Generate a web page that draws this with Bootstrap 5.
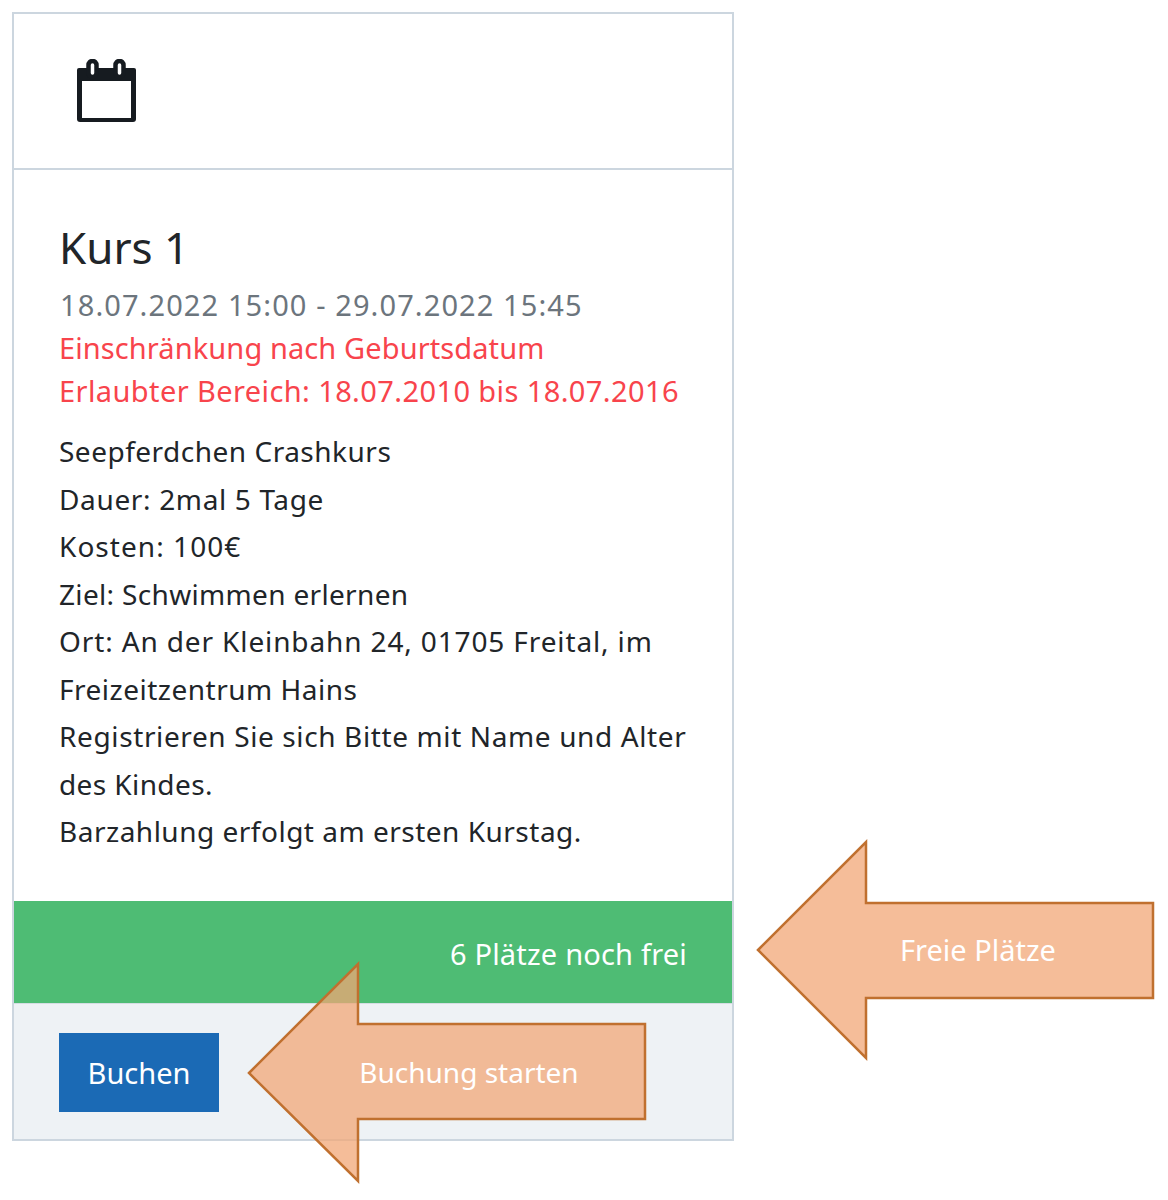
<!DOCTYPE html>
<html lang="de">
<head>
<meta charset="utf-8">
<title>Kurs 1</title>
<link href="https://cdn.jsdelivr.net/npm/bootstrap@5.3.0/dist/css/bootstrap.min.css" rel="stylesheet">
<style>
body { background:#fff; font-family:"Noto Sans","Open Sans",sans-serif; color:#212529; margin:0; }
.stage { position:relative; width:1168px; height:1200px; padding:12px 0 0 12px; }
.kurs-card { width:722px; height:1129px; border:2px solid #ccd6df; border-radius:0; font-size:28px; line-height:47.5px; }
.kurs-head { height:156px; padding:45px 0 0 63px; background:#fff; border-bottom:2px solid #ccd6df; }
.kurs-head svg { display:block; }
.kurs-body { padding:44px 45px 0; flex:1 1 auto; }
.kurs-title { font-size:44px; line-height:66px; margin:0 0 3px 0; font-weight:400; color:#212529; }
.kurs-date { font-size:29px; line-height:43px; color:#6c757d; margin-left:1px; letter-spacing:1.1px; }
.kurs-limit { font-size:29px; line-height:43px; color:#f8444c; }
.kurs-desc { margin-top:16px; }
.kurs-desc span { display:block; }
.sp1 { letter-spacing:.1px; }
.sp3 { letter-spacing:.33px; }
.sp4 { letter-spacing:.4px; }
.sp5 { letter-spacing:.5px; }
.sp6 { letter-spacing:.62px; }
.sp7 { letter-spacing:.65px; }
.sp8 { letter-spacing:.87px; }
.sp9 { letter-spacing:1.05px; }
.kurs-free { height:102px; background:#4ebc74; color:#fff; font-size:29px; padding:29px 45px 0 0; text-align:right; letter-spacing:.2px; }
.kurs-foot { height:136px; background:#eef2f5; padding:29px 0 0 45px; border-top:1px solid #d5dde3; }
.kurs-btn { width:160px; height:79px; border-radius:0; background:#1b6ab5; border:1px solid #1b6ab5; color:#fff; font-size:29px; line-height:1; padding:0; }
.pfeil { position:absolute; left:0; top:0; pointer-events:none; }
.pfeil text { font-family:"Noto Sans","Open Sans",sans-serif; font-size:29px; fill:#fff; text-anchor:middle; }
.pfeil .klein { font-size:28px; }
.pfeil polygon { fill:#f2a676; fill-opacity:.74; stroke:#c0702f; stroke-width:2.5; }
</style>
</head>
<body>
<div class="stage">
  <div class="card kurs-card">
    <div class="kurs-head">
      <svg width="60" height="64" viewBox="77 59 60 64" fill="none" aria-hidden="true">
        <path d="M79 68h55a2 2 0 0 1 2 2v49a3 3 0 0 1-3 3H80a3 3 0 0 1-3-3V70a2 2 0 0 1 2-2z" fill="#161b20"/>
        <rect x="82" y="81" width="49" height="37" fill="#fff"/>
        <rect x="88.5" y="61" width="8" height="16" rx="4" fill="#fff" stroke="#161b20" stroke-width="4.5"/>
        <rect x="115.5" y="61" width="8" height="16" rx="4" fill="#fff" stroke="#161b20" stroke-width="4.5"/>
      </svg>
    </div>
    <div class="kurs-body">
      <h5 class="kurs-title">Kurs 1</h5>
      <div class="kurs-date">18.07.2022 15:00 - 29.07.2022 15:45</div>
      <div class="kurs-limit sp1">Einschränkung nach Geburtsdatum</div>
      <div class="kurs-limit sp4">Erlaubter Bereich: 18.07.2010 bis 18.07.2016</div>
      <div class="kurs-desc">
        <span class="sp5">Seepferdchen Crashkurs</span>
        <span class="sp7">Dauer: 2mal 5 Tage</span>
        <span class="sp9">Kosten: 100€</span>
        <span class="sp3">Ziel: Schwimmen erlernen</span>
        <span class="sp8">Ort: An der Kleinbahn 24, 01705 Freital, im</span>
        <span class="sp5">Freizeitzentrum Hains</span>
        <span class="sp6">Registrieren Sie sich Bitte mit Name und Alter</span>
        <span class="sp4">des Kindes.</span>
        <span class="sp5">Barzahlung erfolgt am ersten Kurstag.</span>
      </div>
    </div>
    <div class="kurs-free">6 Plätze noch frei</div>
    <div class="kurs-foot"><button type="button" class="btn kurs-btn">Buchen</button></div>
  </div>
  <svg class="pfeil" width="1168" height="1200" viewBox="0 0 1168 1200">
    <polygon points="758,950 866,842 866,903 1153,903 1153,998 866,998 866,1058"/>
    <text x="978" y="961">Freie Plätze</text>
    <polygon points="249,1073 358,964 358,1024 645,1024 645,1119 358,1119 358,1181"/>
    <text class="klein" x="469" y="1083">Buchung starten</text>
  </svg>
</div>
<script src="https://cdn.jsdelivr.net/npm/bootstrap@5.3.0/dist/js/bootstrap.bundle.min.js"></script>
</body>
</html>
